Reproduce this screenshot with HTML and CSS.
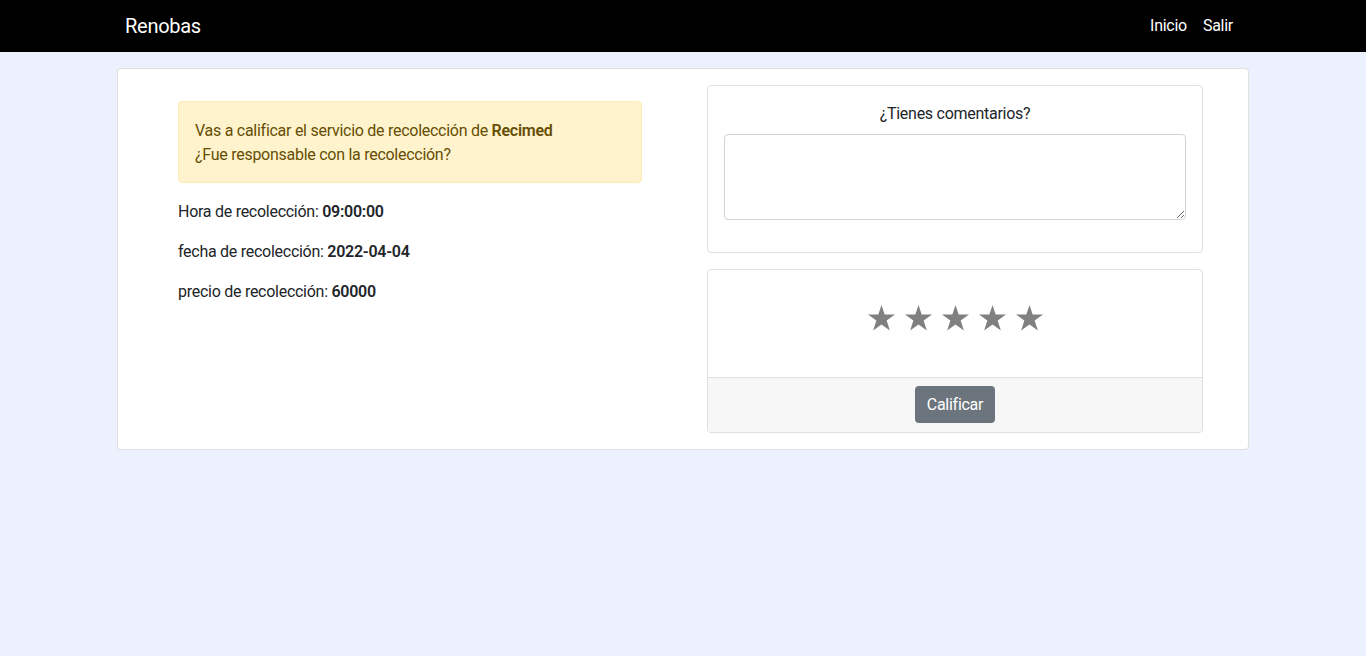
FILE: index.html
```html
<!DOCTYPE html>
<html lang="es">
<head>
<meta charset="utf-8">
<title>Renobas</title>
<link rel="stylesheet" href="styles.css">
</head>
<body>
<nav class="navbar">
  <div class="nav-inner">
    <a class="brand" href="#">Renobas</a>
    <div class="nav-links">
      <a class="nav-link" href="#">Inicio</a>
      <a class="nav-link" href="#">Salir</a>
    </div>
  </div>
</nav>
<main class="wrap">
  <div class="main-card">
    <div class="col-left">
      <div class="alert">Vas a calificar el servicio de recolección de <b>Recimed</b><br>¿Fue responsable con la recolección?</div>
      <p>Hora de recolección: <b>09:00:00</b></p>
      <p>fecha de recolección: <b>2022-04-04</b></p>
      <p>precio de recolección: <b>60000</b></p>
    </div>
    <div class="col-right">
      <div class="card comments">
        <label class="c-label" for="c">¿Tienes comentarios?</label>
        <textarea id="c" class="c-area"></textarea>
      </div>
      <div class="card rating">
        <div class="stars">
          <svg class="star" viewBox="0 0 24 23"><path d="M12 0l2.83 8.4H24l-7.4 5.4 2.83 8.8L12 17.2l-7.43 5.4 2.83-8.8L0 8.4h9.17z"/></svg>
          <svg class="star" viewBox="0 0 24 23"><path d="M12 0l2.83 8.4H24l-7.4 5.4 2.83 8.8L12 17.2l-7.43 5.4 2.83-8.8L0 8.4h9.17z"/></svg>
          <svg class="star" viewBox="0 0 24 23"><path d="M12 0l2.83 8.4H24l-7.4 5.4 2.83 8.8L12 17.2l-7.43 5.4 2.83-8.8L0 8.4h9.17z"/></svg>
          <svg class="star" viewBox="0 0 24 23"><path d="M12 0l2.83 8.4H24l-7.4 5.4 2.83 8.8L12 17.2l-7.43 5.4 2.83-8.8L0 8.4h9.17z"/></svg>
          <svg class="star" viewBox="0 0 24 23"><path d="M12 0l2.83 8.4H24l-7.4 5.4 2.83 8.8L12 17.2l-7.43 5.4 2.83-8.8L0 8.4h9.17z"/></svg>
        </div>
        <div class="card-footer"><button class="btn">Calificar</button></div>
      </div>
    </div>
  </div>
</main>
</body>
</html>
```
FILE: styles.css
```css
* { box-sizing: border-box; }
html, body { margin: 0; padding: 0; }
body {
  background: #edf0fd;
  font-family: Roboto, "Liberation Sans", sans-serif;
  font-size: 16px;
  line-height: 24px;
  letter-spacing: -0.27px;
  color: #212529;
  height: 656px;
}
.navbar { background: #000; height: 52px; }
.nav-inner {
  width: 1140px; margin: 0 auto; padding: 0 12px;
  height: 52px; display: flex; align-items: center; justify-content: space-between;
}
.brand { color: #fff; text-decoration: none; font-size: 20px; line-height: 30px; }
.nav-links { display: flex; }
.nav-link { color: #fff; text-decoration: none; padding: 0 8px; }
.wrap { width: 1132px; margin: 16px auto 0; }
.main-card {
  background: #fff; border: 1px solid #dfdfdf; border-radius: 4px;
  display: grid; grid-template-columns: 529px 496px;
  padding: 16px 0 16px 60px;
}
.col-left { padding-top: 16px; padding-right: 65px; }
.alert {
  background: #fff3cd; border: 1px solid #ffecb5; border-radius: 4px;
  color: #664d03; padding: 17px 16px 15px; margin-bottom: 17px;
}
.alert b { font-weight: 600; }
.col-left p { margin: 0 0 16px; }
.col-left p b { font-weight: 600; }
.card { border: 1px solid #dfdfdf; border-radius: 4px; background: #fff; }
.comments { padding: 16px; display: flex; flex-direction: column; }
.c-label { text-align: center; margin-bottom: 8px; }
.c-area {
  height: 86px; border: 1px solid #ced4da; border-radius: 4px;
  margin-bottom: 16px; resize: vertical; font: inherit;
}
.rating { margin-top: 16px; overflow: hidden; }
.stars {
  height: 107px; display: flex; justify-content: center; align-items: center;
  gap: 10px; padding-bottom: 12px; padding-left: 1px;
}
.star { width: 27px; height: 26px; fill: #808080; }
.card-footer {
  background: #f7f7f7; border-top: 1px solid #dfdfdf;
  padding: 8px 0 9px; display: flex; justify-content: center;
}
.btn {
  background: #6c757d; color: #fff; border: 0; border-radius: 4px;
  font: inherit; letter-spacing: inherit; padding: 6px 12px; line-height: 25px; height: 37px;
}
```
